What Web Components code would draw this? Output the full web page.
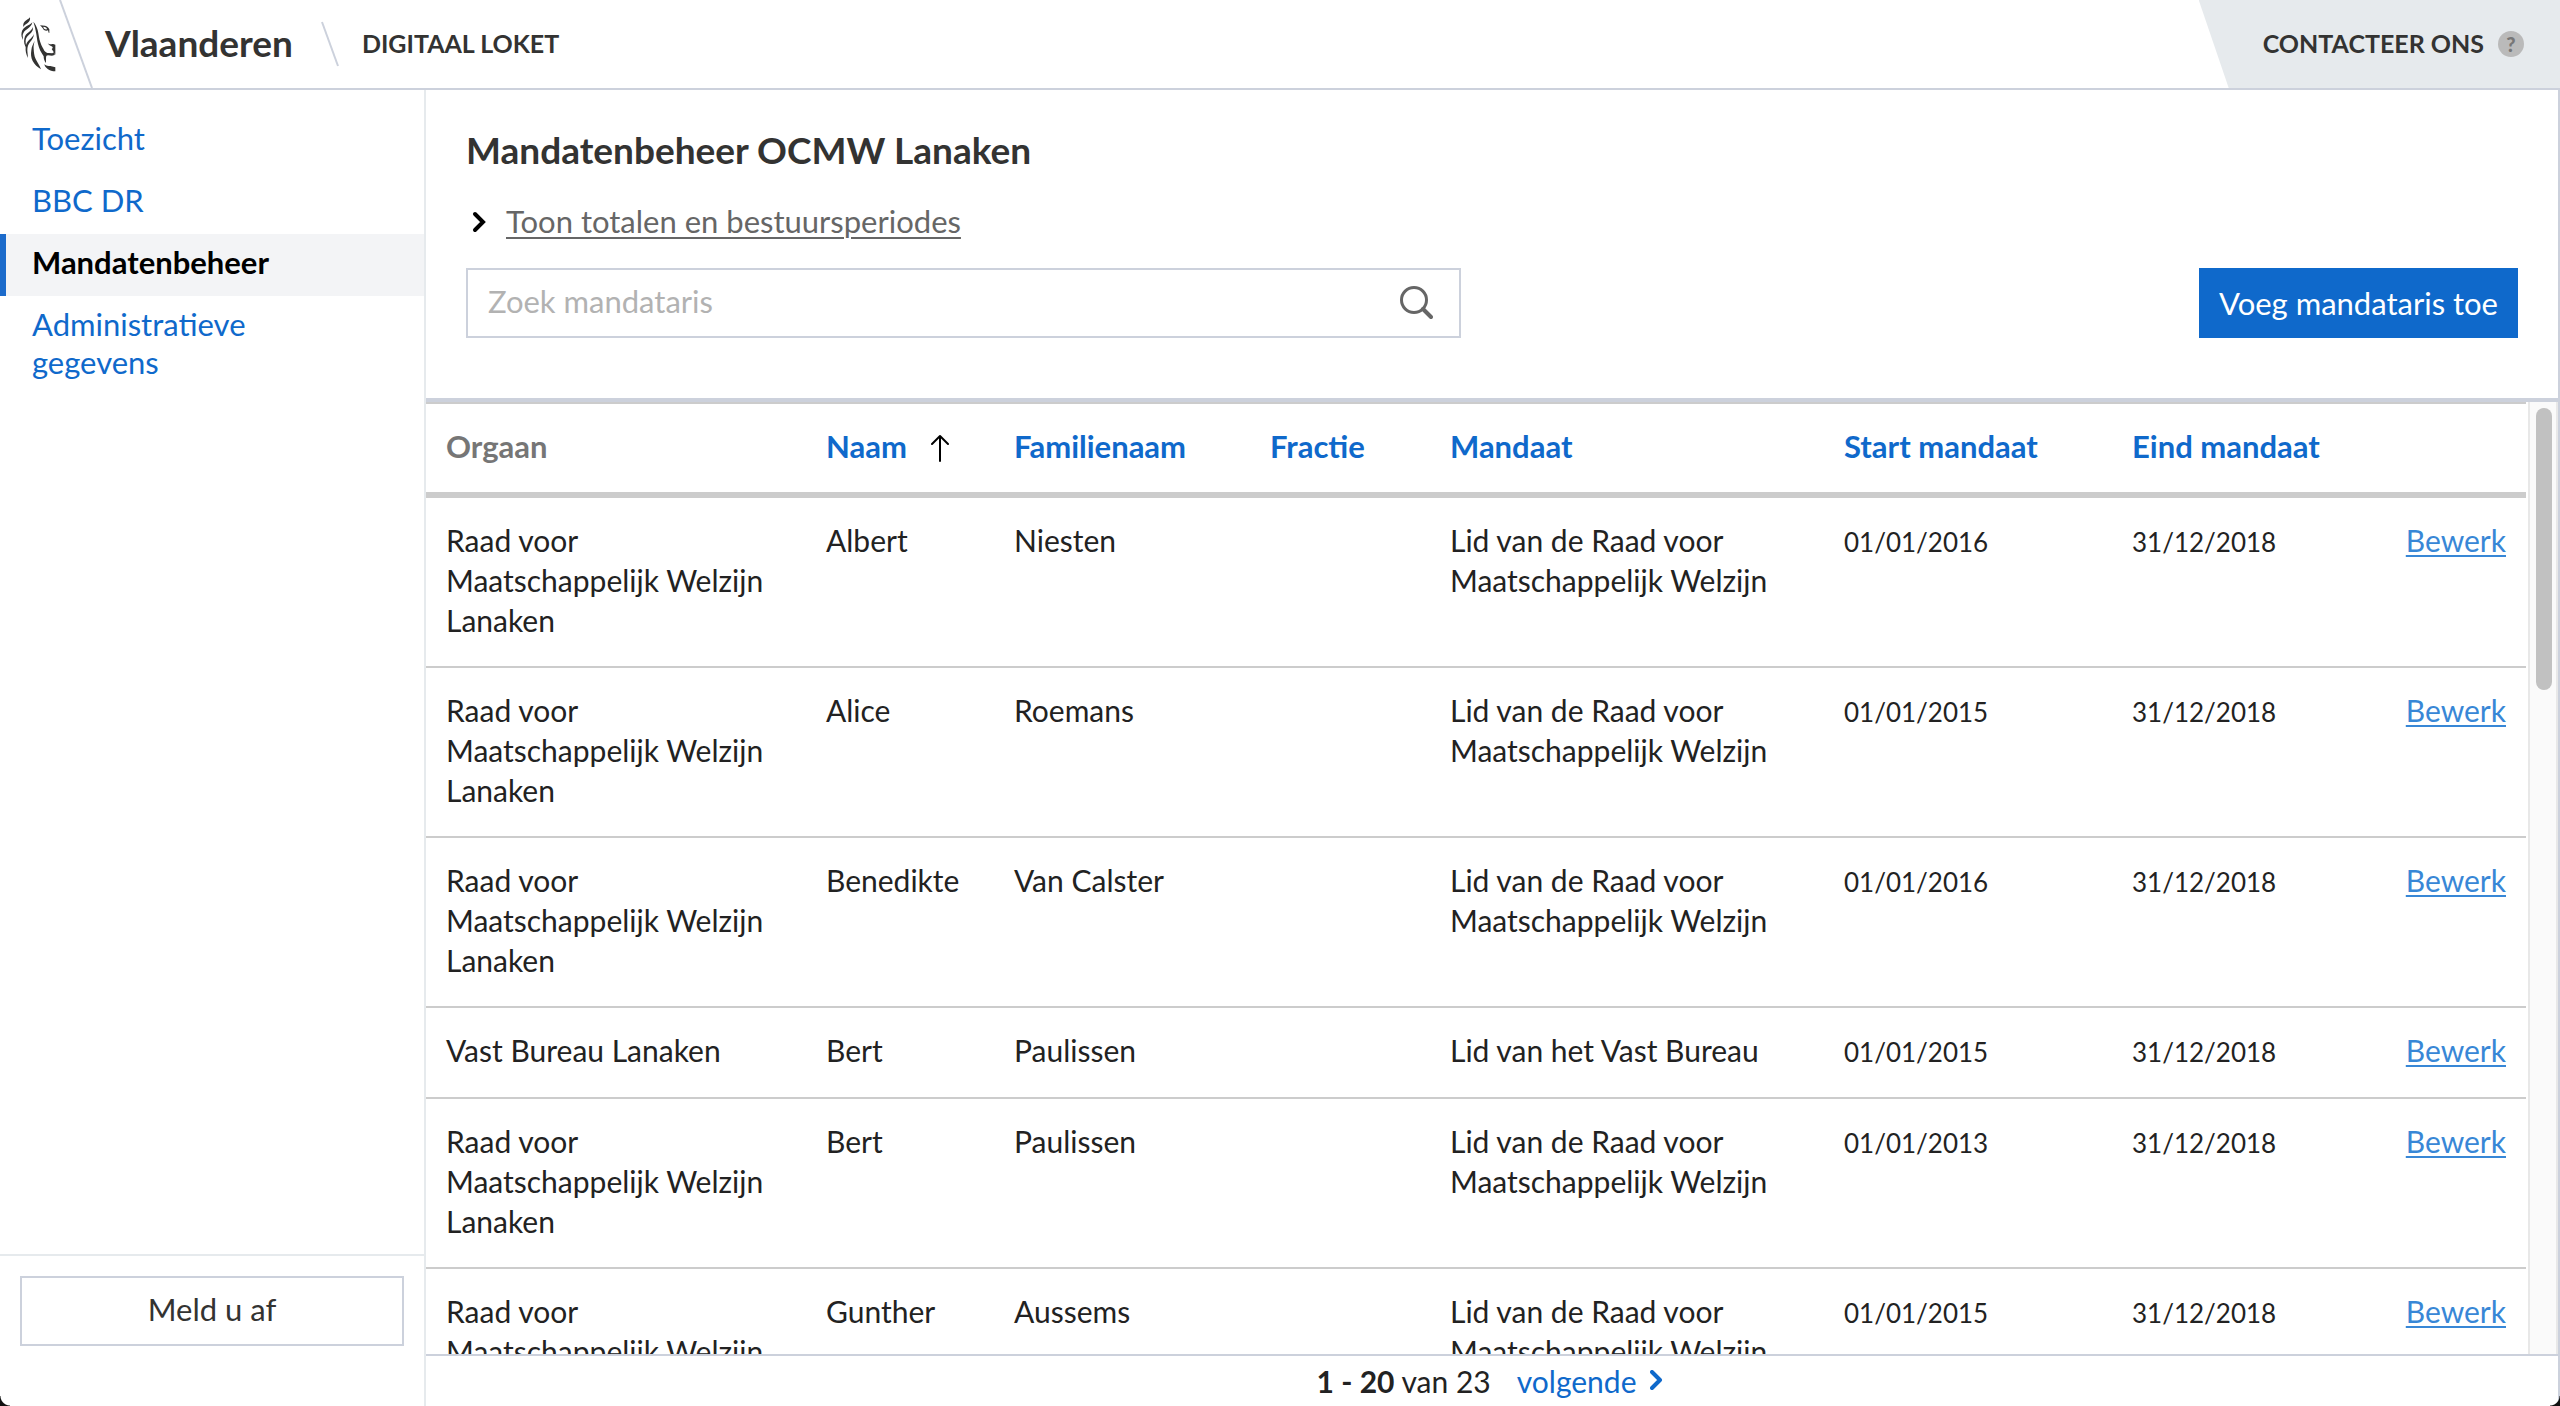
<!DOCTYPE html>
<html lang="nl">
<head>
<meta charset="utf-8">
<title>Mandatenbeheer - Digitaal Loket</title>
<style>
html, body { margin: 0; height: 100%; background: #fff; }
body {
  --blue: #0f69cb; --line: #ccd1dc; --soft: #e6eaed; --text: #333332;
  font-family: Lato, "Open Sans", sans-serif; font-size: 30px; line-height: 40px; color: #222;
}
</style>
</head>
<body>
<loket-app>
  <loket-header slot="header">
    <span slot="brand">Vlaanderen</span>
    <span slot="title">DIGITAAL LOKET</span>
    <span slot="contact">CONTACTEER ONS</span>
  </loket-header>
  <loket-sidebar slot="side">
    <nav-item>Toezicht</nav-item>
    <nav-item>BBC DR</nav-item>
    <nav-item active>Mandatenbeheer</nav-item>
    <nav-item>Administratieve gegevens</nav-item>
    <loket-button slot="footer">Meld u af</loket-button>
  </loket-sidebar>
  <page-intro>
    <span slot="title">Mandatenbeheer OCMW Lanaken</span>
    <span slot="toggle">Toon totalen en bestuursperiodes</span>
    <search-field slot="tools" placeholder="Zoek mandataris"></search-field>
    <loket-button slot="tools" primary>Voeg mandataris toe</loket-button>
  </page-intro>
  <scroll-pane><mandate-table></mandate-table></scroll-pane>
  <page-nav></page-nav>
</loket-app>

<script>
function define(name, html, setup) {
  const template = document.createElement('template');
  template.innerHTML = html;
  customElements.define(name, class extends HTMLElement {
    constructor() {
      super();
      this.attachShadow({ mode: 'open' }).append(template.content.cloneNode(true));
    }
    connectedCallback() { if (setup) setup(this, this.shadowRoot); }
  });
}

define('loket-app', `
<style>
:host { display: flex; flex-direction: column; height: 100vh; overflow: hidden; position: relative; }
.body { flex: 1; min-height: 0; display: flex; }
main { flex: 1; min-width: 0; display: flex; flex-direction: column; border-right: 2px solid var(--line); }
.corner { position: absolute; bottom: 0; width: 10px; height: 10px; }
.left { left: 0; background: radial-gradient(circle at 100% 0, transparent 9px, #111 10px); }
.right { right: 0; background: radial-gradient(circle at 0 0, transparent 9px, #111 10px); }
</style>
<slot name="header"></slot>
<div class="body"><slot name="side"></slot><main><slot></slot></main></div>
<div class="corner left"></div><div class="corner right"></div>`);

define('flemish-lion', `
<style>:host { display: block; } svg { display: block; width: 36px; height: 56px; }</style>
<svg viewBox="62 50 108 168" fill="#333332" aria-hidden="true">
<path d="M92 54c1 8-1 12-7 17-6 4-10 7-13 12-1-7 0-12 5-17s11-6 15-12z"/>
<path d="M99 69c-2 10-7 14-15 20-8 5-12 10-14 18l1 15c-4-7-6-15-4-23 2-9 7-13 14-18 8-4 13-7 18-12z"/>
<path d="M101 83c1 12-5 17-12 23-8 7-11 13-10 24l2 15c-6-8-8-17-6-27 2-11 7-15 14-20 6-5 10-9 12-15z"/>
<path d="M104 104c-1 12-6 17-11 23-7 8-9 15-9 27l2 22c-6-11-8-21-7-33 1-11 5-16 11-22 6-5 11-10 14-17z"/>
<path d="M106 124c-2 9-4 15-3 25 1 11 1 20 6 30 5 11 12 18 16 31-11-7-19-14-25-25-5-10-6-20-4-32 1-13 6-19 10-29z"/>
<path d="M102 67c6 6 10 15 13 25 3 12 4 26 8 37 4 12 8 18 12 25 4 5 8 7 13 7l11 1 7-5v10l-8 2-12-1c-4 0-6 2-6 8v15c-5-6-7-12-7-20-8-12-14-23-17-37-3-12-4-27-7-40-2-11-4-18-7-27z"/>
<path fill-rule="evenodd" d="M122 78l15 1c6 1 10 5 13 11v11l-2-1-2-7c-4 2-9 1-13-2-3-4-5-8-11-13zm10 4c0 6 5 9 11 8 0-5-5-8-11-8z"/>
<path d="M145 132c6 4 9 3 14 2 4 0 6 1 9 2v30l-5-8-6-9c3-2 4-5 2-7-5-2-10-4-14-10z"/>
<path d="M135 195c6 5 11 5 18 5l15 4v12c-9 0-17-3-23-7-6-5-9-8-10-14z"/>
</svg>`);

define('loket-header', `
<style>
:host { display: block; border-bottom: 2px solid var(--line); color: var(--text); font-weight: 700; font-size: 25px; }
header { display: flex; align-items: center; height: 88px; line-height: 40px; }
flemish-lion { padding-left: 20px; }
svg { display: block; flex: none; fill: none; stroke: var(--line); stroke-width: 2; }
.edge { width: 34px; height: 88px; margin-left: 3px; }
.slash { width: 18px; height: 46px; margin: 0 23px 0 28px; }
.brand { font-size: 37px; padding: 0 0 2px 12px; color: inherit; text-decoration: none; }
.title { padding-bottom: 2px; }
.contact { margin-left: auto; box-sizing: border-box; height: 88px; padding: 0 36px 0 64px; display: flex; align-items: center; gap: 14px;
  background: var(--soft); clip-path: polygon(0 0, 100% 0, 100% 100%, 30px 100%); color: inherit; text-decoration: none; }
.contact slot { display: block; padding-bottom: 2px; }
.help { width: 26px; height: 26px; border-radius: 50%; background: #bababa; color: #777; font-size: 20px; line-height: 26px; text-align: center; font-weight: 900; }
</style>
<header>
<flemish-lion></flemish-lion>
<svg class="edge" viewBox="0 0 34 88"><path d="M1 0l32 88"/></svg>
<a class="brand" href="#"><slot name="brand"></slot></a>
<svg class="slash" viewBox="0 0 18 46"><path d="M1 1l16 44"/></svg>
<span class="title"><slot name="title"></slot></span>
<a class="contact" href="#contact"><slot name="contact"></slot><span class="help">?</span></a>
</header>`);

define('loket-sidebar', `
<style>
:host { flex: none; width: 424px; display: flex; flex-direction: column; border-right: 2px solid var(--soft); }
nav { flex: 1; padding-top: 20px; font-size: 31px; line-height: 38px; }
footer { border-top: 2px solid var(--soft); padding: 20px 20px 60px; }
</style>
<nav aria-label="Modules"><slot></slot></nav><footer><slot name="footer"></slot></footer>`);

define('nav-item', `
<style>
:host { display: block; }
a { display: block; padding: 9px 96px 15px 26px; border-left: 6px solid transparent; color: var(--blue); text-decoration: none; }
:host([active]) a { background: #f3f4f6; border-left-color: #1c6bcb; color: #000; font-weight: 700; }
</style>
<a href="#"><slot></slot></a>`);

define('loket-button', `
<style>
:host { display: block; }
button { display: block; box-sizing: border-box; width: 100%; height: 70px; padding: 0 18px 4px; font: inherit; font-size: 31px;
  color: var(--text); background: #fff; border: 2px solid var(--line); border-radius: 0; white-space: nowrap; }
:host([primary]) button { padding-bottom: 0; background: var(--blue); border-color: var(--blue); color: #fff; }
</style>
<button type="button"><slot></slot></button>`);

define('page-intro', `
<style>
:host { display: block; flex: none; padding: 38px 40px 60px; border-bottom: 4px solid var(--line); }
h1 { margin: 0; font-size: 37px; line-height: 44px; font-weight: 700; color: var(--text); }
.toggle { display: flex; align-items: center; gap: 20px; margin: 26px 0 24px; padding: 0 0 0 6px; border: 0; background: none; font: inherit; font-size: 31px; line-height: 46px; color: #666; text-align: left; }
.toggle span { text-decoration: underline; text-decoration-thickness: 2px; text-underline-offset: 4px; }
svg { width: 14px; height: 26px; fill: none; stroke: #000; stroke-width: 4; stroke-linecap: round; }
.tools { display: flex; justify-content: space-between; }
</style>
<h1><slot name="title"></slot></h1>
<button class="toggle" type="button"><svg viewBox="0 0 14 26"><path d="M3 6l8 8-8 8"/></svg><span><slot name="toggle"></slot></span></button>
<div class="tools"><slot name="tools"></slot></div>`);

define('search-field', `
<style>
:host { display: block; width: 48.5%; }
label { display: flex; align-items: center; box-sizing: border-box; height: 70px; padding: 0 26px 0 20px; border: 2px solid var(--line); }
input { flex: 1; min-width: 0; padding: 0 0 4px; border: 0; outline: 0; font: inherit; font-size: 31px; background: none; color: #222; }
input::placeholder { color: #b2b2b2; opacity: 1; }
svg { width: 34px; height: 34px; fill: none; stroke: #666; stroke-width: 3; stroke-linecap: round; }
</style>
<label><input type="search" aria-label="Zoek mandataris">
<svg viewBox="0 0 34 34"><circle cx="15" cy="14" r="12.5"/><path d="M24 23l8 8" stroke-width="4"/></svg></label>`,
(host, root) => { root.querySelector('input').placeholder = host.getAttribute('placeholder'); });

define('scroll-pane', `
<style>
:host { flex: 1; min-height: 0; display: flex; gap: 2px; }
.view { flex: 1; min-width: 0; overflow: hidden; }
.track { flex: none; box-sizing: border-box; width: 30px; padding: 6px 4px 6px 6px; background: #fafafa; border: solid #e8e8e8; border-width: 0 2px; }
.thumb { width: 16px; height: 30%; border-radius: 8px; background: #c1c1c1; }
</style>
<div class="view"><slot></slot></div><div class="track"><div class="thumb"></div></div>`);

const RAAD = 'Raad voor Maatschappelijk Welzijn Lanaken';
const LID = 'Lid van de Raad voor Maatschappelijk Welzijn';
const rows = [
  [RAAD, 'Albert', 'Niesten', '', LID, '01/01/2016', '31/12/2018'],
  [RAAD, 'Alice', 'Roemans', '', LID, '01/01/2015', '31/12/2018'],
  [RAAD, 'Benedikte', 'Van Calster', '', LID, '01/01/2016', '31/12/2018'],
  ['Vast Bureau Lanaken', 'Bert', 'Paulissen', '', 'Lid van het Vast Bureau', '01/01/2015', '31/12/2018'],
  [RAAD, 'Bert', 'Paulissen', '', LID, '01/01/2013', '31/12/2018'],
  [RAAD, 'Gunther', 'Aussems', '', LID, '01/01/2015', '31/12/2018']
];

define('mandate-table', `
<style>
:host { display: block; }
table { width: 100%; table-layout: fixed; border-collapse: separate; border-spacing: 0; border-top: 2px solid #ccc; }
th, td { padding: 22px 20px 26px; text-align: left; vertical-align: baseline; border-bottom: 2px solid #ccc; }
th { color: #767676; font-size: 31px; font-weight: 700; border-bottom-width: 6px; white-space: nowrap; }
th a { color: var(--blue); text-decoration: none; }
td a { color: #3887d6; text-decoration: underline; text-decoration-thickness: 2px; text-underline-offset: 3px; }
.date { font-size: 26px; line-height: 38px; }
td:last-child { text-align: right; }
th svg { width: 18px; height: 28px; margin-left: 24px; vertical-align: -4px; fill: none; stroke: #000; stroke-width: 2; stroke-linecap: round; stroke-linejoin: round; }
</style>
<table>
<colgroup><col style="width:380px"><col style="width:188px"><col style="width:256px"><col style="width:180px"><col style="width:394px"><col style="width:288px"><col style="width:254px"><col style="width:160px"></colgroup>
<thead><tr><th>Orgaan</th><th><a href="#">Naam</a><svg viewBox="0 0 18 28"><path d="M9 27V2M1 10l8-8 8 8"/></svg></th><th><a href="#">Familienaam</a></th><th><a href="#">Fractie</a></th><th><a href="#">Mandaat</a></th><th><a href="#">Start mandaat</a></th><th><a href="#">Eind mandaat</a></th><th></th></tr></thead>
<tbody></tbody>
</table>`,
(host, root) => {
  root.querySelector('tbody').innerHTML = rows.map(r =>
    '<tr>' + r.map((c, i) => `<td${i > 4 ? ' class="date"' : ''}>${c}</td>`).join('') + '<td><a href="#">Bewerk</a></td></tr>').join('');
});

define('page-nav', `
<style>
:host { flex: none; display: flex; justify-content: center; gap: 26px; padding: 8px 0; line-height: 34px; border-top: 2px solid var(--line); }
a { display: flex; align-items: center; gap: 14px; margin-right: 4px; color: var(--blue); text-decoration: none; }
svg { width: 13px; height: 22px; fill: none; stroke: currentColor; stroke-width: 4; stroke-linecap: round; stroke-linejoin: round; }
</style>
<span><b>1 - 20</b> van 23</span>
<a href="#">volgende <svg viewBox="0 0 13 22"><path d="M2 2l8 8-8 8"/></svg></a>`);
</script>
</body>
</html>
